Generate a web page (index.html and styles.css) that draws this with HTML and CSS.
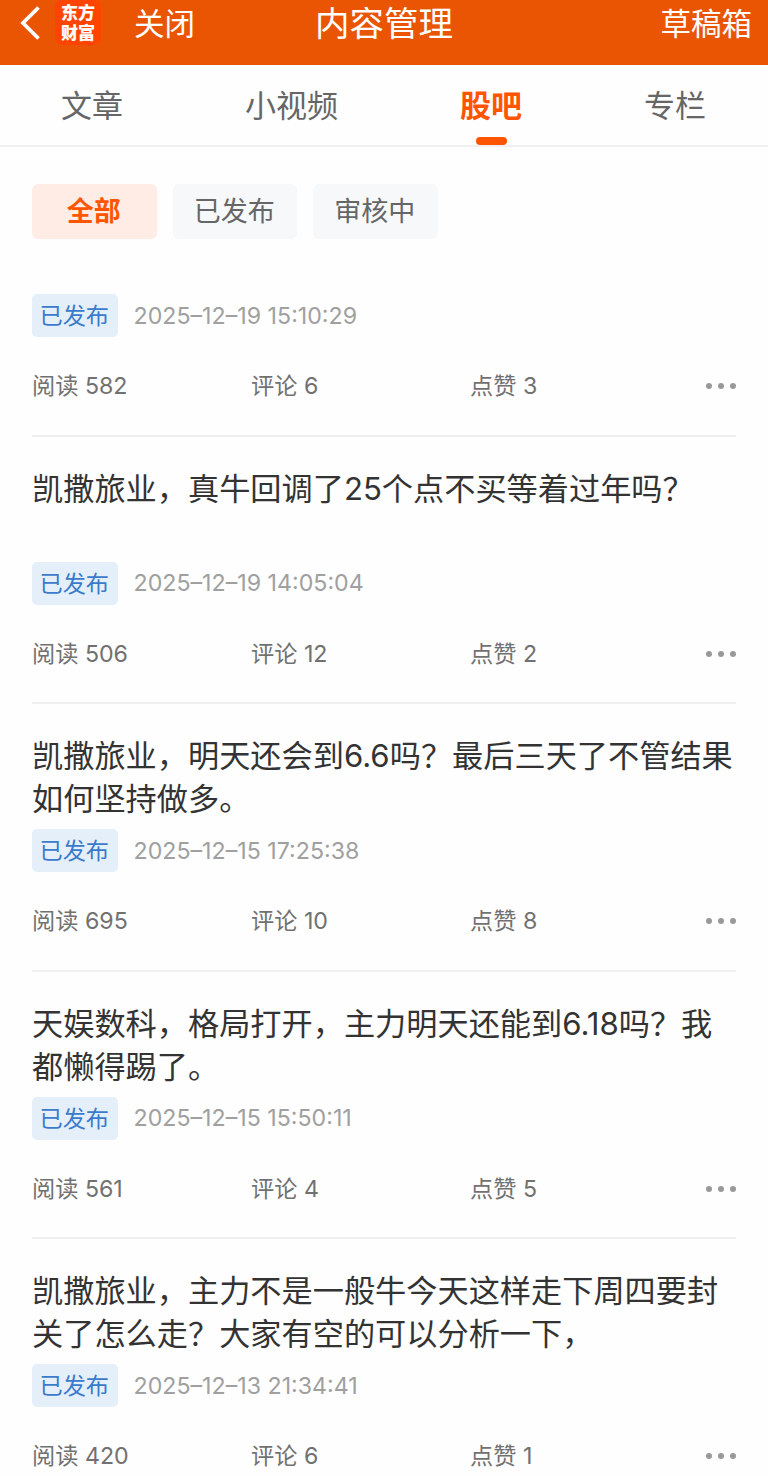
FILE: index.html
```html
<!DOCTYPE html>
<html lang="zh-CN">
<head>
    <meta charset="UTF-8">
    <meta name="viewport" content="width=device-width, initial-scale=1.0">
    <title>内容管理</title>
    <link rel="stylesheet" href="styles.css">
</head>
<body>

    <header class="topbar">
        <div class="topbar-left">
            <svg class="back" width="20" height="34" viewBox="0 0 20 34">
                <path d="M18.5 1.5 L3 17 L18.5 32.5" fill="none" stroke="#fff" stroke-width="3.8"/>
            </svg>
            <div class="logo"><span>东方</span><span>财富</span></div>
            <a class="close">关闭</a>
        </div>
        <h1>内容管理</h1>
        <a class="drafts">草稿箱</a>
    </header>

    <nav class="tabs">
        <a>文章</a>
        <a>小视频</a>
        <a class="active">股吧</a>
        <a>专栏</a>
    </nav>

    <div class="filters">
        <button class="active">全部</button>
        <button>已发布</button>
        <button>审核中</button>
    </div>

    <main class="list">
        <article class="post">
            <div class="meta"><span class="status">已发布</span><time>2025–12–19 15:10:29</time></div>
            <div class="stats">
                <span>阅读 582</span><span>评论 6</span><span>点赞 3</span>
                <div class="more"><i></i><i></i><i></i></div>
            </div>
        </article>
        <article class="post">
            <h2>凯撒旅业，真牛回调了25个点不买等着过年吗？</h2>
            <div class="meta"><span class="status">已发布</span><time>2025–12–19 14:05:04</time></div>
            <div class="stats">
                <span>阅读 506</span><span>评论 12</span><span>点赞 2</span>
                <div class="more"><i></i><i></i><i></i></div>
            </div>
        </article>
        <article class="post">
            <h2>凯撒旅业，明天还会到6.6吗？最后三天了不管结果<br>如何坚持做多。</h2>
            <div class="meta"><span class="status">已发布</span><time>2025–12–15 17:25:38</time></div>
            <div class="stats">
                <span>阅读 695</span><span>评论 10</span><span>点赞 8</span>
                <div class="more"><i></i><i></i><i></i></div>
            </div>
        </article>
        <article class="post">
            <h2>天娱数科，格局打开，主力明天还能到6.18吗？我<br>都懒得踢了。</h2>
            <div class="meta"><span class="status">已发布</span><time>2025–12–15 15:50:11</time></div>
            <div class="stats">
                <span>阅读 561</span><span>评论 4</span><span>点赞 5</span>
                <div class="more"><i></i><i></i><i></i></div>
            </div>
        </article>
        <article class="post">
            <h2>凯撒旅业，主力不是一般牛今天这样走下周四要封<br>关了怎么走？大家有空的可以分析一下，</h2>
            <div class="meta"><span class="status">已发布</span><time>2025–12–13 21:34:41</time></div>
            <div class="stats">
                <span>阅读 420</span><span>评论 6</span><span>点赞 1</span>
                <div class="more"><i></i><i></i><i></i></div>
            </div>
        </article>
    </main>

</body>
</html>
```
FILE: styles.css
```css
* {
    box-sizing: border-box;
}

body {
    margin: 0;
    height: 1476px;
    overflow: hidden;
    background: #fefefe;
    font-family: Inter, "Noto Sans CJK SC", sans-serif;
    color: #333;
}

/* header */
.topbar {
    display: grid;
    grid-template-columns: 1fr auto 1fr;
    align-items: center;
    height: 65px;
    padding: 0 16px 19px 20px;
    background: #ea5504;
    color: #fff;
}

.topbar-left {
    display: flex;
    align-items: center;
}

.back {
    display: block;
    margin-top: -1px;
}

.logo {
    display: flex;
    flex-direction: column;
    align-items: center;
    justify-content: center;
    width: 46px;
    height: 46px;
    margin: -3px 0 0 15px;
    border-radius: 8px;
    background: #ff4400;
    font-family: "Noto Sans CJK SC", sans-serif;
    font-size: 17px;
    font-weight: 900;
    line-height: 20px;
}

.logo span {
    height: 20px;
}

.close,
.drafts {
    font-size: 30.5px;
    line-height: 47px;
}

.close {
    margin-left: 33px;
}

.drafts {
    justify-self: end;
}

.topbar h1 {
    margin: 0 4px 0 0;
    font-size: 34.5px;
    font-weight: 400;
    line-height: 47px;
}

/* tabs */
.tabs {
    display: flex;
    justify-content: space-between;
    height: 82px;
    padding: 0 62px 0 61px;
    border-bottom: 2px solid #f0f0f0;
    font-size: 31px;
    line-height: 81px;
    color: #666;
}

.tabs a {
    position: relative;
}

.tabs .active {
    color: #ff5500;
    font-weight: 700;
}

.tabs .active::after {
    content: "";
    position: absolute;
    left: 50%;
    bottom: 0;
    width: 31px;
    height: 8px;
    margin-left: -15.5px;
    border-radius: 4px;
    background: #ff5500;
}

/* filters */
.filters {
    display: flex;
    gap: 16px;
    padding: 37px 32px 0;
}

.filters button {
    width: 124.5px;
    height: 55px;
    padding: 1px 1px 0 0;
    border: none;
    border-radius: 6px;
    background: #f7f8fa;
    color: #666;
    font-family: inherit;
    font-size: 27px;
    line-height: 54px;
}

.filters .active {
    background: #ffece4;
    color: #ff5500;
    font-weight: 700;
}

/* posts */
.list {
    padding: 24px 32px 0;
}

.post {
    height: 267.5px;
    padding-top: 31px;
    border-bottom: 2px solid #efefef;
}

.post:first-child {
    height: 173.5px;
}

.post h2 {
    height: 86px;
    margin: 0 0 8px;
    font-size: 31.2px;
    font-weight: 400;
    line-height: 43px;
    white-space: nowrap;
}

.meta {
    display: flex;
    align-items: center;
    gap: 16px;
    height: 43px;
}

.status {
    width: 85.5px;
    height: 43px;
    padding-right: 1px;
    border-radius: 5px;
    background: #e5effa;
    color: #3a7bcb;
    font-size: 23.2px;
    line-height: 44px;
    text-align: center;
}

.meta time {
    color: #a0a0a0;
    font-size: 23.2px;
}

.stats {
    display: grid;
    grid-template-columns: 219px 219px 1fr auto;
    align-items: center;
    height: 36px;
    margin-top: 31px;
    color: #717171;
    font-size: 23.2px;
    line-height: 36px;
}

.more {
    display: flex;
    gap: 6px;
}

.more i {
    width: 6px;
    height: 6px;
    border-radius: 50%;
    background: #999;
}
```
